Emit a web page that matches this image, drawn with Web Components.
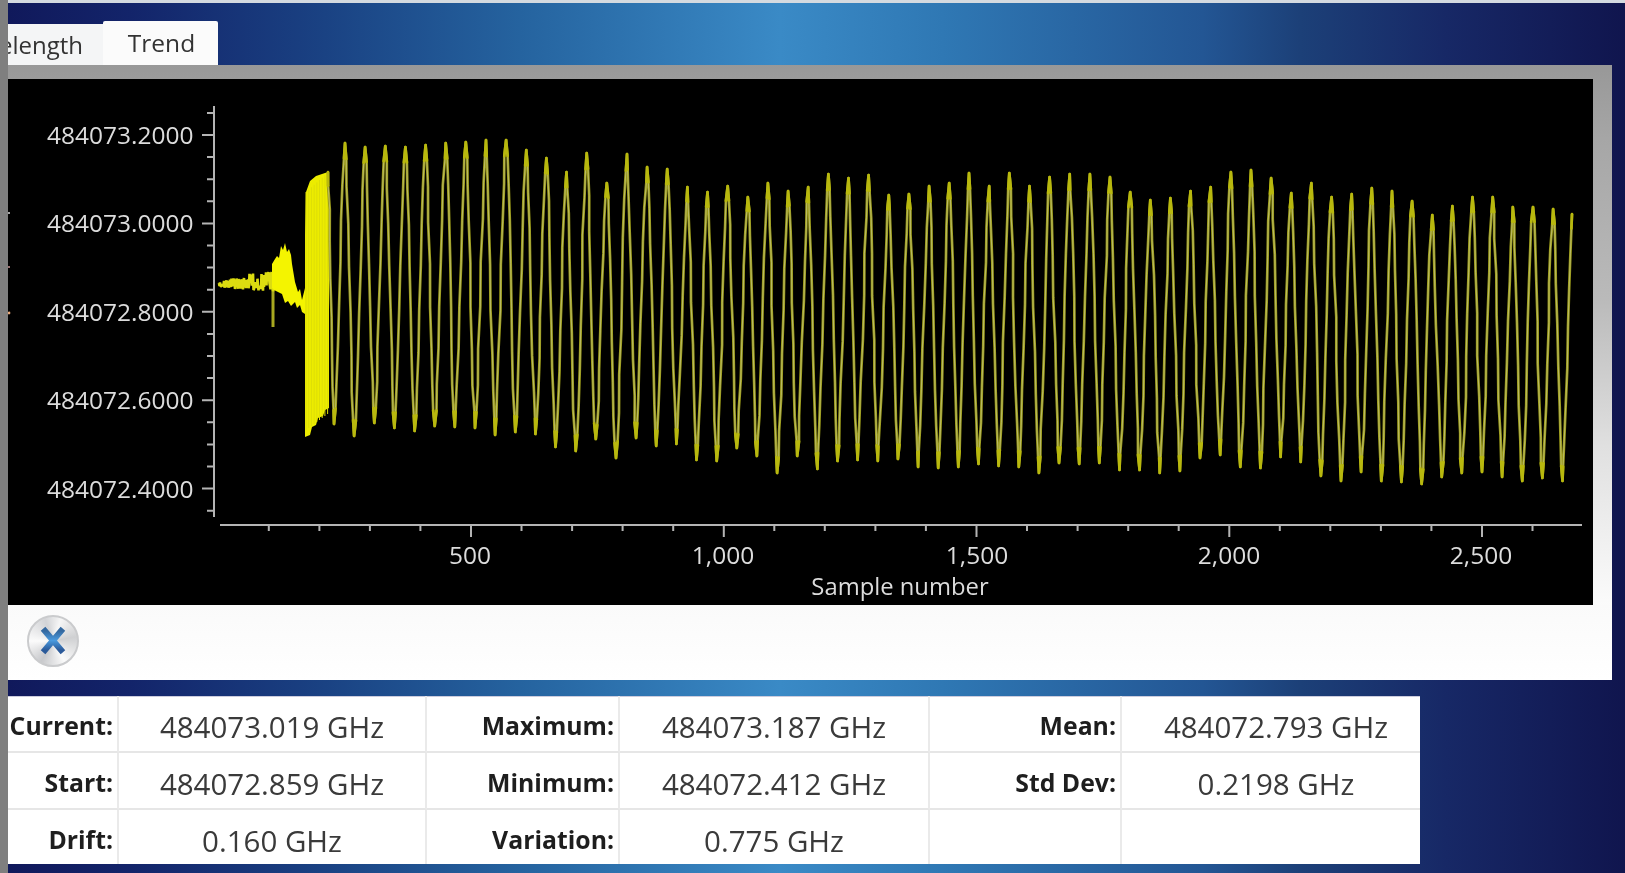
<!DOCTYPE html>
<html lang="en">
<head>
<meta charset="utf-8">
<title>Trend</title>
<style>
html,body{margin:0;padding:0;height:100%;overflow:hidden;background:#10154e}
</style>
</head>
<body>
<trend-app>
  <tab-strip slot="tabs">
    <tab-item clipped>elength</tab-item>
    <tab-item active>Trend</tab-item>
  </tab-strip>
  <chart-panel slot="panel">
    <trend-chart></trend-chart>
    <close-button slot="actions"></close-button>
  </chart-panel>
  <stats-table slot="stats">
    <stat-cell label>Current:</stat-cell><stat-cell>484073.019 GHz</stat-cell>
    <stat-cell label>Maximum:</stat-cell><stat-cell>484073.187 GHz</stat-cell>
    <stat-cell label>Mean:</stat-cell><stat-cell>484072.793 GHz</stat-cell>
    <stat-cell label>Start:</stat-cell><stat-cell>484072.859 GHz</stat-cell>
    <stat-cell label>Minimum:</stat-cell><stat-cell>484072.412 GHz</stat-cell>
    <stat-cell label>Std Dev:</stat-cell><stat-cell>0.2198 GHz</stat-cell>
    <stat-cell label>Drift:</stat-cell><stat-cell>0.160 GHz</stat-cell>
    <stat-cell label>Variation:</stat-cell><stat-cell>0.775 GHz</stat-cell>
    <stat-cell label></stat-cell><stat-cell></stat-cell>
  </stats-table>
</trend-app>
<script>
const FONT = '"Open Sans","Noto Sans","Liberation Sans",sans-serif';

function shadow(el, html){
  const r = el.attachShadow({mode:'open'});
  r.innerHTML = html;
  return r;
}

customElements.define('trend-app', class extends HTMLElement{
  constructor(){super();shadow(this,`
    <style>
      :host{display:flex;width:1625px;height:873px;overflow:hidden;font-family:${FONT};
        background:linear-gradient(90deg,#10185a 0,#13246a 8%,#1a4283 20%,#25639f 32%,#3a8ac6 48%,#2f78b4 58%,#235694 74%,#1c4078 80%,#172866 89%,#10154e 100%)}
      .bar{width:8px;flex:none;background:#7f7f7f}
      .main{flex:1;min-width:0;display:flex;flex-direction:column}
      .top{height:3px;flex:none;background:#d4dae0}
      .tabs{height:62px;flex:none;display:flex;align-items:flex-end}
      .panel{flex:none;margin-right:13px}
      .stats{flex:none;margin-top:16px;margin-right:205px}
    </style>
    <div class="bar"></div>
    <div class="main">
      <div class="top"></div>
      <div class="tabs"><slot name="tabs"></slot></div>
      <div class="panel"><slot name="panel"></slot></div>
      <div class="stats"><slot name="stats"></slot></div>
    </div>`);}
});

customElements.define('tab-strip', class extends HTMLElement{
  constructor(){super();shadow(this,`
    <style>:host{display:flex;align-items:flex-end}</style><slot></slot>`);}
});

customElements.define('tab-item', class extends HTMLElement{
  constructor(){super();shadow(this,`
    <style>
      :host{display:flex;align-items:center;box-sizing:border-box;overflow:hidden;
        font-size:24px;color:#333;background:#f4f5f6;height:41px;width:95px;filter:blur(.45px)}
      :host([clipped]) span{margin-left:-9px}
      :host([active]){height:44px;width:115px;background:#fbfbfb;border-radius:2px 2px 0 0;justify-content:center;padding:0 0 1px 2px;font-size:24.5px}
    </style><span><slot></slot></span>`);}
});

customElements.define('chart-panel', class extends HTMLElement{
  constructor(){super();shadow(this,`
    <style>
      :host{display:block;box-sizing:border-box;height:615px;padding:14px 19px 0 0;
        background:linear-gradient(180deg,#989898 0,#a6a6a6 12%,#bababa 38%,#e0e0e0 62%,#fbfbfb 88%,#fff 100%)}
      .actions{height:75px;box-sizing:border-box;display:flex;align-items:center;padding:0 0 4px 19px;background:linear-gradient(#fafafa,#fff);margin-right:-19px}
    </style>
    <slot></slot>
    <div class="actions"><slot name="actions"></slot></div>`);}
});

customElements.define('trend-chart', class extends HTMLElement{
  constructor(){
    super();
    const tops=[143,147,146,147,145,143,142,140,140,150,158,172,153,183,154,167,169,187,192,186,197,183,
      191,187,174,178,175,195,194,186,183,173,186,173,186,177,174,174,177,192,200,198,191,187,
      172,170,178,193,183,197,194,188,191,201,215,206,197,197,207,207,209];
    const bots=[424,436,423,428,431,426,427,428,435,432,434,447,451,439,458,438,446,444,460,461,448,456,473,
      456,469,461,460,461,459,467,468,467,464,466,467,473,463,464,463,470,470,473,471,458,455,
      467,468,457,462,476,481,472,481,482,484,477,473,472,477,481,478,481];
    let seed=7;const rnd=()=>{seed=(seed*16807)%2147483647;return seed/2147483647;};
    const P=20.14;
    const ex=[[328,172]];
    for(let k=0;k<bots.length;k++){
      ex.push([334+P*k,bots[k]]);
      if(k<tops.length) ex.push([345+P*k-(k>30?.3:0),tops[k]]);
    }
    ex.push([1572,214]);
    let main='',hot='';
    for(let i=0;i<ex.length-1;i++){
      const [x0,y0]=ex[i],[x1,y1]=ex[i+1];
      const n=9;
      const pts=[];
      for(let j=0;j<=n;j++){
        const t=j/n;
        const s=.3*t+.7*(1-Math.cos(Math.PI*t))/2;
        const jx=(j>0&&j<n)?(rnd()-.5)*1.2:0;
        pts.push([x0+(x1-x0)*t+jx,y0+(y1-y0)*s]);
      }
      main+=(i?'L':'M')+pts.map(p=>p[0].toFixed(1)+' '+p[1].toFixed(1)).join('L');
      hot+='M'+pts.slice(0,2).map(p=>p[0].toFixed(1)+' '+p[1].toFixed(1)).join('L');
      hot+='M'+pts.slice(n-1).map(p=>p[0].toFixed(1)+' '+p[1].toFixed(1)).join('L');
    }
    let noise='M219 283';
    for(let x=219.5;x<274;x+=.5){
      const amp=x<245?4.5+(x-219)*.06:7.5+(x-245)*.14;
      const c=x<245?284-(x-219)*.02:282;
      noise+='L'+x.toFixed(1)+' '+(c+(rnd()-.5)*2*amp).toFixed(1);
    }
    let burst='';
    for(let i=0;i<9;i++){
      const x=306+i*2.7;
      burst+=`M${x.toFixed(1)} ${192-i*2.4}L${x.toFixed(1)} ${430-i*2}`;
    }
    const yMajor={135:'484073.2000',223.3:'484073.0000',312:'484072.8000',400:'484072.6000',488.6:'484072.4000'};
    let ax='M214 106L214 517M220 525L1582 525';
    const step=(488.6-135)/16;
    for(let i=-1;i<=17;i++){
      const y=135+step*i;
      const major=(i%4===0);
      ax+=`M${major?202:207} ${y.toFixed(1)}L214 ${y.toFixed(1)}`;
    }
    for(let v=100;v<=2600;v+=100){
      const x=471+(v-500)*.5055;
      ax+=`M${x.toFixed(1)} 525L${x.toFixed(1)} ${v%500===0?537:531}`;
    }
    const yl=Object.entries(yMajor).sort((a,b)=>a[0]-b[0]).map(([y,t])=>
      `<text class="yl" x="193.5" y="${(+y+9).toFixed(1)}" text-anchor="end">${t}</text>`).join('');
    const xl=[[470,'500'],[723,'1,000'],[977,'1,500'],[1229,'2,000'],[1481,'2,500']].map(([x,t])=>
      `<text x="${x}" y="564" text-anchor="middle">${t}</text>`).join('');
    shadow(this,`
    <style>
      :host{display:block;height:526px;background:#000}
      svg{display:block;width:100%;height:100%;filter:blur(.55px)}
      text{font-family:${FONT};font-size:24.5px;fill:#dcdcdc}
      .yl{font-size:24.5px}
    </style>
    <svg viewBox="8 79 1585 526" xmlns="http://www.w3.org/2000/svg" aria-label="Trend chart">
      <path d="${ax}" stroke="#b4b4b4" stroke-width="2" fill="none"/>
      ${yl}${xl}
      <text x="900" y="595" text-anchor="middle" style="font-size:23.8px">Sample number</text>
      <path d="M273 288L273 327" stroke="#a8a820" stroke-width="3"/>
      <path d="${noise}" stroke="#dcdc10" stroke-width="2.6" fill="none" stroke-linejoin="bevel"/>
      <polygon fill="#f4f400" points="272,264 275,259 277,256 279,258 281,246 283,250 285,243 287,252 289,249 291,255 292,264 295,282 298,292 300,289 302,300 305,288 305,314 302,312 300,305 297,308 295,302 291,306 288,301 285,303 282,294 278,292 274,290 272,288"/>
      <polygon fill="#ecec00" points="305,235 306,192 310,181 316,176 328,172 329,172 329,408 325,410 323,416 318,418 316,425 312,427 310,435 305,437"/>
      <path d="${burst}" stroke="#dede06" stroke-width="1" fill="none"/>
      <path d="${main}" stroke="#9a9a1a" stroke-width="2.7" fill="none" stroke-linejoin="round"/>
      <path d="${main}" stroke="#d6d6a0" stroke-width=".8" fill="none" opacity=".7"/>
      <path d="${hot}" stroke="#b8b80e" stroke-width="2.7" fill="none" stroke-linecap="round"/>
      <circle cx="9" cy="213" r="1" fill="#ddd"/><circle cx="9" cy="267" r="1" fill="#c99"/><circle cx="9" cy="313" r="1.4" fill="#e9a97a"/>
    </svg>`);
  }
});

customElements.define('close-button', class extends HTMLElement{
  constructor(){super();shadow(this,`
    <style>
      :host{display:block;width:52px;height:52px;border-radius:50%;box-sizing:border-box;
        border:2px solid #cacbcd;filter:blur(.6px);
        background:conic-gradient(from 20deg,#f6f6f6,#cfd0d2 60deg,#fafafa 130deg,#c8c9cc 190deg,#fbfbfb 250deg,#d2d3d6 320deg,#f6f6f6)}
      svg{display:block;width:100%;height:100%}
    </style>
    <svg viewBox="0 0 48 48" xmlns="http://www.w3.org/2000/svg" aria-label="Close">
      <defs><linearGradient id="g" x1="0" y1="0" x2="0" y2="1">
        <stop offset="0" stop-color="#34689f"/><stop offset=".5" stop-color="#4a9ade"/><stop offset="1" stop-color="#2b5a9a"/>
      </linearGradient></defs>
      <path d="M16 14L32 33M32 14L16 33" stroke="url(#g)" stroke-width="6" stroke-linecap="square" fill="none"/>
    </svg>`);}
});

customElements.define('stats-table', class extends HTMLElement{
  constructor(){super();shadow(this,`
    <style>
      :host{display:grid;box-sizing:border-box;height:168px;background:#fff;
        grid-template-columns:111px 308px 193px 310px 192px 1fr;grid-template-rows:57px 57px 54px;
        box-shadow:inset 0 1px 0 #ccd;filter:blur(.4px)}
    </style><slot></slot>`);}
});

customElements.define('stat-cell', class extends HTMLElement{
  constructor(){super();shadow(this,`
    <style>
      :host{display:flex;align-items:center;justify-content:center;box-sizing:border-box;
        font-size:29.5px;color:#3a3a3a;border-right:2px solid #eaeaea;border-bottom:2px solid #e6e6e6;white-space:nowrap;padding-top:6px}
      :host([label]){justify-content:flex-end;font-weight:700;font-size:24.8px;color:#1e1e1e;padding:2px 4px 0 0}
      :host(:nth-child(n+13)){border-bottom:0;padding-top:7px}
      :host([label]:nth-child(n+13)){padding-top:3px}
      :host(:nth-child(6n)){border-right:0;padding-left:10px}
    </style><slot></slot>`);}
});
</script>
</body>
</html>
